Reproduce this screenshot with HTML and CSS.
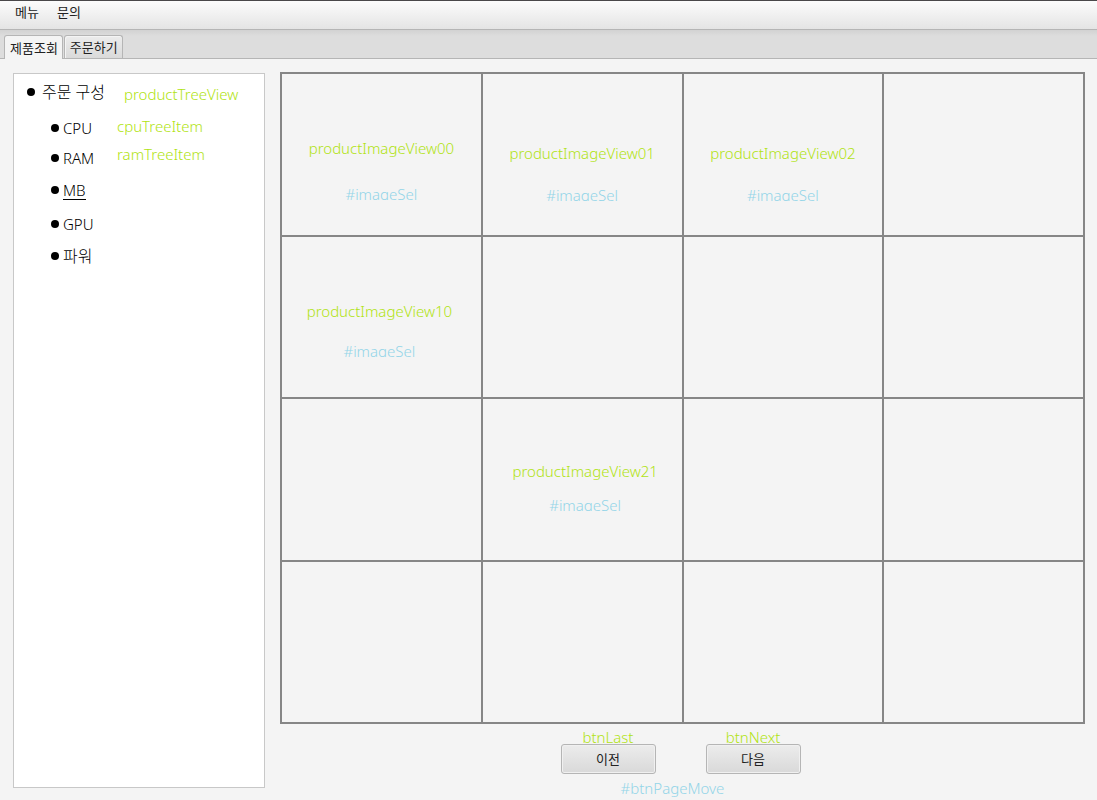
FILE: index.html
```html
<!DOCTYPE html>
<html lang="ko">
<head>
<meta charset="utf-8">
<title>제품조회</title>
<link rel="stylesheet" href="styles.css">
</head>
<body>
<nav class="menubar">
  <button class="menu" type="button">메뉴</button>
  <button class="menu" type="button">문의</button>
</nav>
<div class="tabs" role="tablist">
  <button class="tab tab-active" type="button" role="tab" aria-selected="true">제품조회</button>
  <button class="tab" type="button" role="tab" aria-selected="false">주문하기</button>
</div>
<main class="content">
  <aside class="tree">
    <div class="row root"><span class="dot"></span><span class="item">주문 구성</span><span class="id id-low">productTreeView</span></div>
    <ul class="branch">
      <li class="row"><span class="dot"></span><span class="item">CPU</span><span class="id id-high">cpuTreeItem</span></li>
      <li class="row row-short"><span class="dot"></span><span class="item">RAM</span><span class="id id-higher">ramTreeItem</span></li>
      <li class="row row-tall"><span class="dot"></span><span class="item selected">MB</span></li>
      <li class="row"><span class="dot"></span><span class="item">GPU</span></li>
      <li class="row"><span class="dot"></span><span class="item hangul">파워</span></li>
    </ul>
  </aside>
  <section class="catalog">
    <div class="grid">
      <div class="cell spread"><span class="id">productImageView00</span><span class="selector clipped">#imageSel</span></div>
      <div class="cell low"><span class="id">productImageView01</span><span class="selector clipped">#imageSel</span></div>
      <div class="cell low"><span class="id">productImageView02</span><span class="selector clipped">#imageSel</span></div>
      <div class="cell"></div>
      <div class="cell"><span class="id">productImageView10</span><span class="selector clipped">#imageSel</span></div>
      <div class="cell"></div>
      <div class="cell"></div>
      <div class="cell"></div>
      <div class="cell"></div>
      <div class="cell tight"><span class="id">productImageView21</span><span class="selector clipped">#imageSel</span></div>
      <div class="cell"></div>
      <div class="cell"></div>
      <div class="cell"></div>
      <div class="cell"></div>
      <div class="cell"></div>
      <div class="cell"></div>
    </div>
    <div class="pager">
      <div class="pager-buttons">
        <div class="page"><label class="id" for="btnLast">btnLast</label><button class="button" id="btnLast" type="button">이전</button></div>
        <div class="page"><label class="id" for="btnNext">btnNext</label><button class="button" id="btnNext" type="button">다음</button></div>
      </div>
      <span class="selector pager-selector">#btnPageMove</span>
    </div>
  </section>
</main>
</body>
</html>
```
FILE: styles.css
```css
* {
  box-sizing: border-box;
}

body {
  display: flex;
  flex-direction: column;
  min-height: 100vh;
  margin: 0;
  background: #f4f4f4;
  color: #000;
  font: 300 15px/20px "Noto Sans", "Noto Sans CJK KR", sans-serif;
}

button {
  margin: 0;
  color: #222;
  font: 400 13px/20px "Noto Sans CJK KR", sans-serif;
}

.menubar {
  display: flex;
  gap: 18px;
  height: 30px;
  padding: 1px 15px 0;
  border-top: 1px solid #4a484a;
  border-bottom: 1px solid #b5b5b5;
  background: linear-gradient(#fcfcfc, #e4e4e4);
}

.menu {
  height: 20px;
  padding: 0;
  border: 0;
  background: none;
}

.tabs {
  display: flex;
  align-items: flex-end;
  gap: 1px;
  height: 29px;
  padding: 0 4px;
  border-bottom: 1px solid #b5b5b5;
  background: linear-gradient(#d2d2d2, #dddddd 6px);
}

.tab {
  height: 23px;
  padding: 0 4px 0 5px;
  border: 1px solid #b5b5b5;
  border-bottom: 0;
  border-radius: 3px 3px 0 0;
  background: linear-gradient(#ececec, #dadada);
  box-shadow: inset 1px 1px #f4f4f4;
}

.tab-active {
  height: 24px;
  margin-bottom: -1px;
  background: #f4f4f4;
}

.content {
  display: flex;
  flex: 1;
  gap: 15px;
  padding: 13px 12px 0 13px;
}

.tree {
  flex: 0 0 252px;
  margin: 1px 0 12px;
  border: 1px solid #c8c8c8;
  background: #fff;
}

.row {
  display: flex;
  align-items: center;
  height: 32px;
}

.root {
  height: 36px;
  margin-bottom: 2px;
  padding-left: 13px;
}

.branch {
  margin: 0;
  padding: 0 0 0 37px;
  list-style: none;
}

.row-short {
  height: 28px;
}

.row-tall {
  height: 36px;
}

.dot {
  width: 8px;
  height: 8px;
  margin-right: 4px;
  border-radius: 50%;
  background: #000;
}

.root .dot {
  margin-right: 7px;
}

.item {
  min-width: 54px;
}

.root .item {
  min-width: 82px;
}

.root .item,
.hangul {
  font-size: 16px;
}

.item.selected {
  min-width: 0;
  border-bottom: 1px solid #000;
  line-height: 18px;
}

.id {
  color: #b0e312;
}

.id-low {
  padding-top: 4px;
}

.id-high {
  padding-bottom: 4px;
}

.id-higher {
  padding-bottom: 8px;
}

.selector {
  color: #93d5e8;
}

.clipped {
  height: 16px;
  overflow: hidden;
}

.catalog {
  display: flex;
  flex: 1;
  flex-direction: column;
  min-width: 0;
}

.grid {
  display: grid;
  flex: 1;
  grid-template-columns: repeat(4, 1fr);
  grid-template-rows: repeat(4, 1fr);
  gap: 2px;
  padding: 2px;
  background: #868686;
}

.cell {
  display: flex;
  flex-direction: column;
  align-items: center;
  gap: 20px;
  padding: 64px 4px 0 0;
  background: #f4f4f4;
}

.spread {
  gap: 26px;
  padding-right: 0;
}

.low {
  gap: 22px;
  padding: 69px 0 0;
}

.tight {
  gap: 14px;
  padding: 62px 0 0 6px;
}

.pager {
  display: flex;
  flex-direction: column;
  align-items: center;
  height: 76px;
  padding: 4px 4px 0 0;
}

.pager-buttons {
  display: flex;
  gap: 50px;
}

.page {
  display: flex;
  flex-direction: column;
  align-items: center;
}

.page .id {
  height: 16px;
  line-height: 18px;
}

.button {
  width: 95px;
  height: 30px;
  border: 1px solid #b5b5b5;
  border-radius: 3px;
  background: linear-gradient(#ececec, #d9d9d9);
  box-shadow: inset 0 0 0 1px #f0f0f0;
}

.pager-selector {
  padding: 4px 16px 0 0;
}
```
